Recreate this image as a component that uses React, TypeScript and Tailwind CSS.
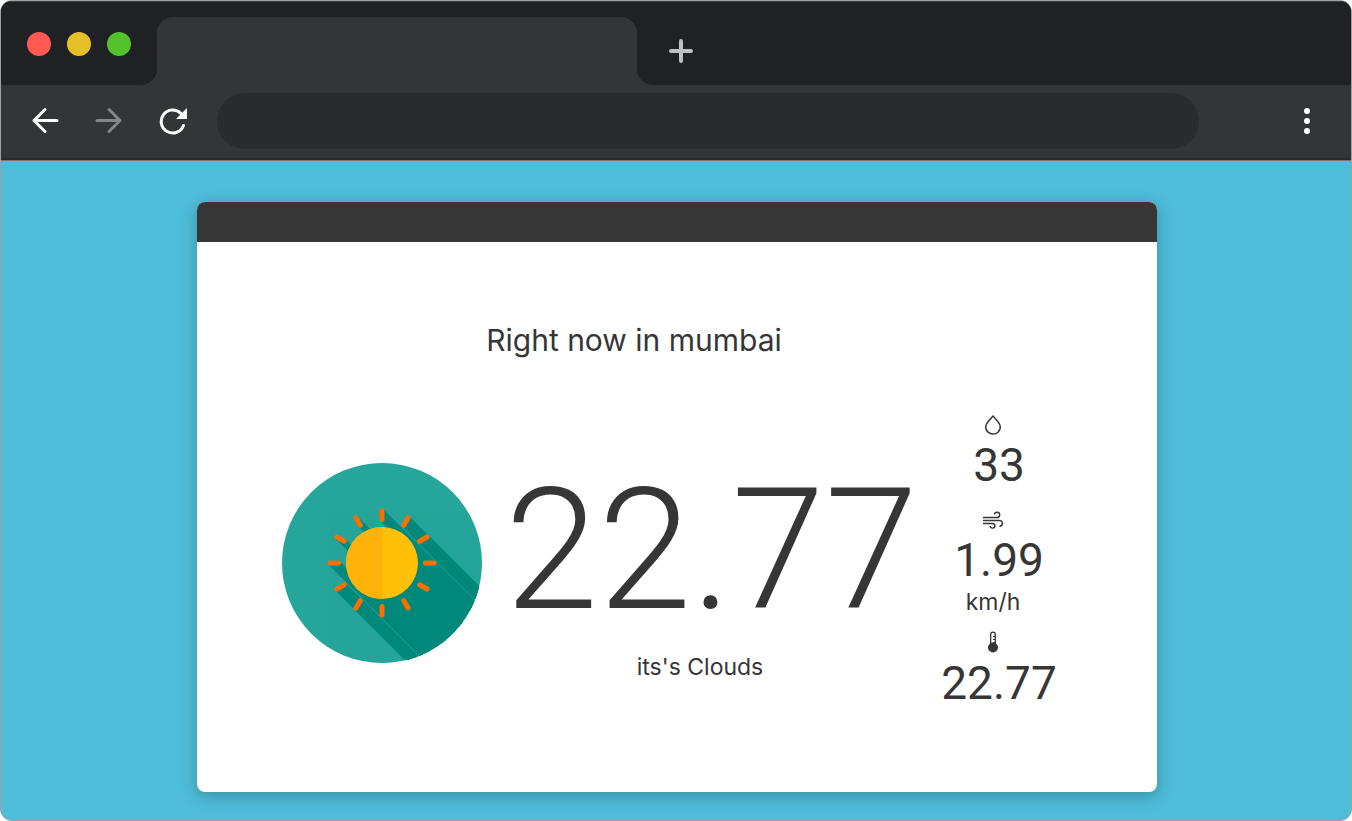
const RAYS = Array.from({ length: 12 }, (_, i) => {
  const a = (i * Math.PI) / 6;
  const s = Math.sin(a);
  const c = Math.cos(a);
  return { x1: 100 + 43.5 * s, y1: 100 - 43.5 * c, x2: 100 + 52 * s, y2: 100 - 52 * c };
});

function SunIcon() {
  return (
    <svg viewBox="0 0 200 200" className="size-[200px] shrink-0" role="img" aria-label="Sunny">
      <defs>
        <clipPath id="disc">
          <circle cx="100" cy="100" r="100" />
        </clipPath>
      </defs>
      <circle cx="100" cy="100" r="100" fill="#26a69a" />
      <g clipPath="url(#disc)">
        <g fill="#00897b" stroke="#00897b" strokeWidth="4.4" strokeLinejoin="round">
          {RAYS.map((r, i) => (
            <path
              key={i}
              d={`M${r.x1} ${r.y1}L${r.x2} ${r.y2}L${r.x2 + 200} ${r.y2 + 200}L${r.x1 + 200} ${r.y1 + 200}Z`}
            />
          ))}
        </g>
        <path d="M125.500 74.500L325.500 274.500L274.500 325.500L74.500 125.500Z" fill="#00897b" />
        <path d="M106 49L193 136M110 60L200 143M48 103L150 205M82 118L170 206" stroke="#26a69a" strokeWidth="0.400" opacity="0.400" />
      </g>
      <g stroke="#ff6f00" strokeWidth="5" strokeLinecap="round">
        {RAYS.map((r, i) => (
          <line key={i} {...r} />
        ))}
      </g>
      <circle cx="100" cy="100" r="36" fill="#ffc107" />
      <path d="M100 64a36 36 0 0 0 0 72z" fill="#ffb20a" />
    </svg>
  );
}

function DropIcon() {
  return (
    <svg viewBox="0 0 20 20" className="size-5" fill="none" stroke="currentColor" strokeWidth="1.5" strokeLinejoin="round" aria-hidden="true">
      <path d="M10 1L15 6.800C18.400 11 17.500 14.500 15.200 16.900A7.300 7.300 0 0 1 4.800 16.900C2.500 14.500 1.600 11 5 6.800Z" />
    </svg>
  );
}

function WindIcon() {
  return (
    <svg viewBox="0 0 20 20" className="size-5" fill="none" stroke="currentColor" strokeWidth="1.4" aria-hidden="true">
      <path d="M0 7.500H14A2.600 2.600 0 1 0 11.500 4.500M0 10.500H16.500A2.800 2.800 0 1 1 16.500 16.200M0 13.500H9.500A2.300 2.300 0 1 1 7.300 16" />
    </svg>
  );
}

function ThermometerIcon() {
  return (
    <svg viewBox="0 0 20 22" className="h-[22px] w-5" fill="none" aria-hidden="true">
      <path d="M7.700 13V3.500a2.300 2.300 0 0 1 4.600 0V13" stroke="currentColor" strokeWidth="1.300" />
      <path d="M10 5.500h2M10 8.500h2M10 11.500h2" stroke="currentColor" strokeWidth="1" />
      <circle cx="10" cy="16.500" r="5" fill="currentColor" />
    </svg>
  );
}

function Toolbar() {
  return (
    <header className="border-b border-[#777777] bg-[#323639]">
      <div className="flex h-[84px] border-t border-[#3e3f41] bg-[#202124]">
        <div className="flex w-[156px] shrink-0 bg-[#323639]">
          <div className="flex grow gap-4 rounded-br-2xl bg-[#202124] pt-[30px] pl-[26px]">
            <span className="size-6 rounded-full bg-[#ff5a52]" />
            <span className="size-6 rounded-full bg-[#e6c029]" />
            <span className="size-6 rounded-full bg-[#54c22b]" />
          </div>
        </div>
        <div className="flex w-[480px] shrink-0 flex-col bg-[#202124] pt-[15px]">
          <div className="grow rounded-t-2xl bg-[#323639]" />
        </div>
        <div className="flex grow bg-[#323639]">
          <div className="grow rounded-bl-2xl bg-[#202124] pt-[37px] pl-8">
            <button aria-label="New tab" className="block text-[#bdc1c6]">
              <svg viewBox="0 0 24 24" className="size-6" stroke="currentColor" strokeWidth="4" strokeLinecap="round">
                <path d="M12 2v20M2 12h20" />
              </svg>
            </button>
          </div>
        </div>
      </div>
      <div className="flex h-[75px] items-center border-b-2 border-[#292b2d] pr-[41px] pb-[2px] pl-[30px] text-white">
        <button aria-label="Back">
          <svg viewBox="0 0 28 28" className="size-7" fill="none" stroke="currentColor" strokeWidth="3" strokeLinecap="round" strokeLinejoin="round">
            <path d="M26 13.500H3M14 2.500L3 13.500l11 11" />
          </svg>
        </button>
        <button aria-label="Forward" className="ml-9 text-[#848688]">
          <svg viewBox="0 0 28 28" className="size-7" fill="none" stroke="currentColor" strokeWidth="3" strokeLinecap="round" strokeLinejoin="round">
            <path d="M2 13.500h23M14 2.500l11 11-11 11" />
          </svg>
        </button>
        <button aria-label="Reload" className="ml-9">
          <svg viewBox="0 0 28 28" className="size-7" fill="none" stroke="currentColor" strokeWidth="3" strokeLinecap="round">
            <path d="M24.500 18.500A11.500 11.500 0 1 1 22 6.500" />
            <path d="M28 1v11H17z" fill="currentColor" stroke="none" />
          </svg>
        </button>
        <input aria-label="Address" className="mr-[105px] ml-[30px] h-14 min-w-0 grow rounded-full bg-[#292c2f] px-6 outline-none" />
        <button aria-label="Menu">
          <svg viewBox="0 0 6 28" className="h-7 w-[6px]" fill="currentColor">
            <circle cx="3" cy="4" r="3" />
            <circle cx="3" cy="14" r="3" />
            <circle cx="3" cy="24" r="3" />
          </svg>
        </button>
      </div>
    </header>
  );
}

export default function App() {
  return (
    <div className="flex min-h-screen flex-col overflow-hidden rounded-xl border border-[#a0a0a0] bg-[#4ebdd9] font-['Inter',sans-serif] text-[#363636]">
      <Toolbar />
      <main className="flex grow justify-center pt-[41px] pr-6 pb-7 pl-[26px]">
        <section className="flex w-full max-w-[960px] flex-col overflow-hidden rounded-lg bg-white shadow-[0_4px_16px_rgba(0,0,0,0.25)]">
          <div className="h-10 bg-[#363636]" />
          <div className="flex grow items-start pt-[76px] pl-[85px]">
            <div className="w-[636px]">
              <h1 className="pr-4 pl-[84px] text-center text-[30px] leading-[44px]">Right now in mumbai</h1>
              <div className="flex pt-[101px]">
                <SunIcon />
                <div className="grow pt-1">
                  <p className="text-right font-['Roboto',sans-serif] text-[168px] leading-[168px] font-[350]">22.77</p>
                  <p className="pt-4 text-center text-[23px] leading-8">its&apos;s Clouds</p>
                </div>
              </div>
            </div>
            <dl className="mt-[97px] w-[162px] text-center">
              <dt className="flex justify-center pr-3"><DropIcon /></dt>
              <dd className="font-['Roboto',sans-serif] text-[46px] leading-[60px]">33</dd>
              <dt className="mt-[15px] flex justify-center pr-3"><WindIcon /></dt>
              <dd>
                <span className="block font-['Roboto',sans-serif] text-[46px] leading-[60px]">1.99</span>
                <span className="block pr-3 text-[23px] leading-6">km/h</span>
              </dd>
              <dt className="mt-[17px] flex justify-center pr-3"><ThermometerIcon /></dt>
              <dd className="font-['Roboto',sans-serif] text-[46px] leading-[60px]">22.77</dd>
            </dl>
          </div>
        </section>
      </main>
    </div>
  );
}
